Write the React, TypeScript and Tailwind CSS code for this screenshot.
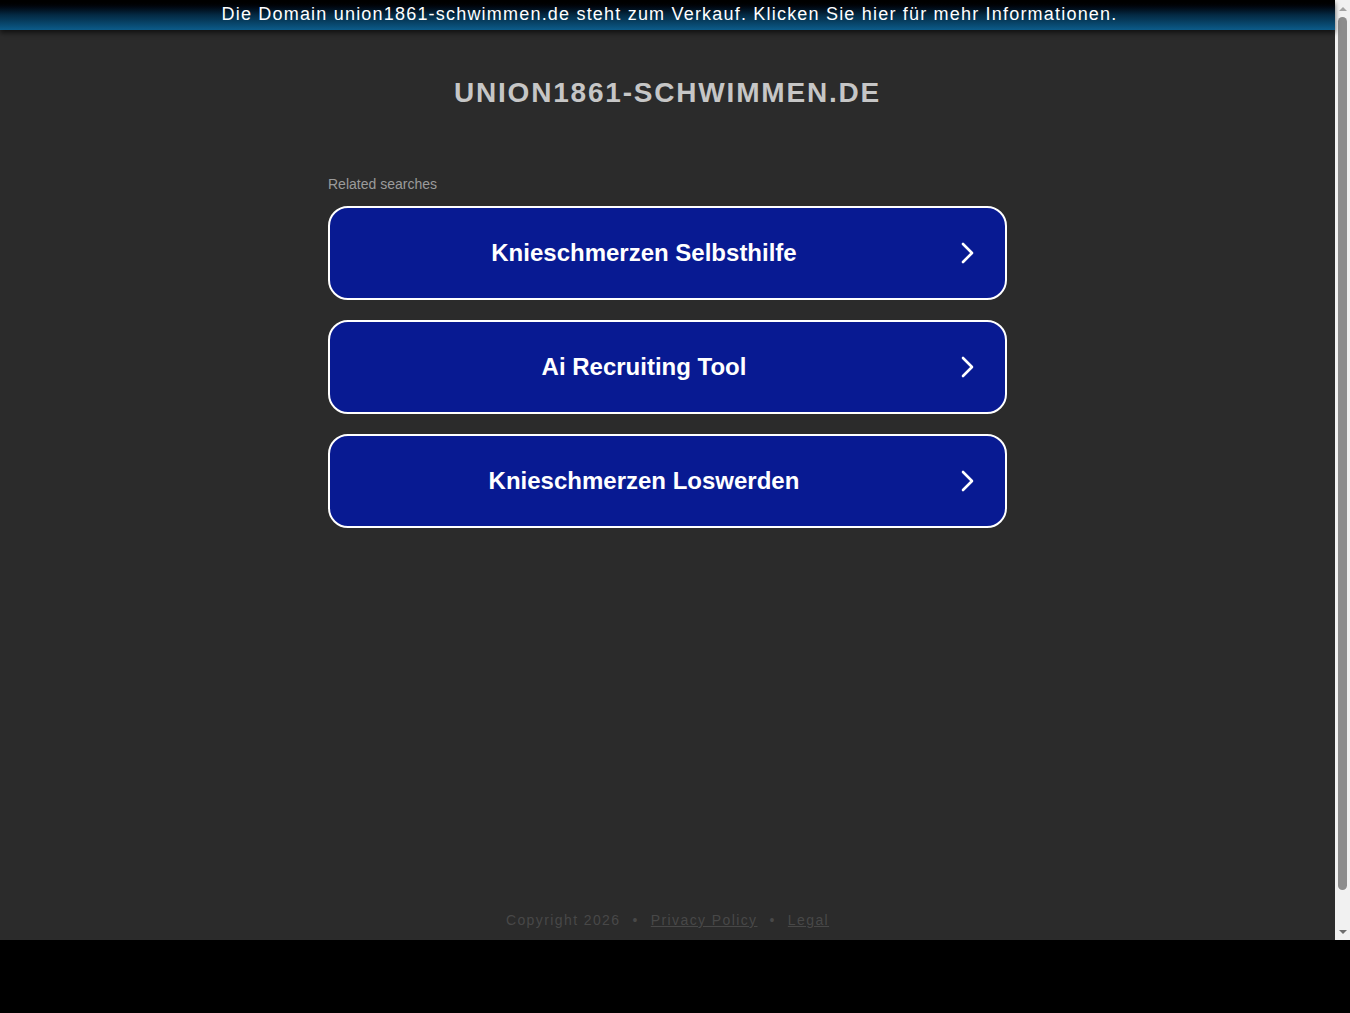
import React from 'react';

const searches = ['Knieschmerzen Selbsthilfe', 'Ai Recruiting Tool', 'Knieschmerzen Loswerden'];

function Chevron() {
  return (
    <svg width="14" height="22" viewBox="0 0 14 22" fill="none" className="shrink-0 ml-[3px]">
      <path d="M2 2l9 9-9 9" stroke="white" strokeWidth="2.6" strokeLinecap="round" strokeLinejoin="round" />
    </svg>
  );
}

function Scrollbar() {
  return (
    <div className="w-[15px] h-full bg-[#f1f1f1] flex flex-col items-center">
      <div className="h-[17px] flex items-center justify-center">
        <div className="w-0 h-0 border-x-[4px] border-x-transparent border-b-[4px] border-b-[#a3a3a3]" />
      </div>
      <div className="w-[9px] flex-1 bg-[#8c8c8c] rounded-[5px] mb-[33px]" />
      <div className="h-[17px] flex items-center justify-center">
        <div className="w-0 h-0 border-x-[4px] border-x-transparent border-t-[4px] border-t-[#6e6e6e]" />
      </div>
    </div>
  );
}

export default function App() {
  return (
    <div className="w-[1350px] h-[1013px] bg-black flex flex-col" style={{ fontFamily: '"Liberation Sans", Arial, sans-serif' }}>
      <div className="h-[940px] flex">
        <div className="flex-1 flex flex-col bg-[#2b2b2b]">
          <div className="h-[30px] bg-gradient-to-b from-black via-[#042a44] to-[#0c5c8a] flex items-center justify-center shadow-[0_3px_5px_rgba(0,0,0,0.6)] relative">
            <p className="text-[18px] text-white tracking-[1.2px] leading-none -mt-[3px] ml-[4px]">
              Die Domain union1861-schwimmen.de steht zum Verkauf. Klicken Sie hier für mehr Informationen.
            </p>
          </div>
          <h1 className="mt-[47px] text-center text-[28px] font-bold text-[#c6c6c6] tracking-[1.8px] leading-[32px]">
            UNION1861-SCHWIMMEN.DE
          </h1>
          <div className="w-[679px] mx-auto mt-[67px]">
            <p className="text-[14px] text-[#9b9b9b] leading-[16px]">Related searches</p>
            <div className="mt-[14px] flex flex-col gap-[20px]">
              {searches.map((s) => (
                <div
                  key={s}
                  className="h-[94px] rounded-[20px] border-2 border-white bg-[#081a92] flex items-center pr-[30px]"
                >
                  <span className="flex-1 text-center text-[24px] font-bold text-white">{s}</span>
                  <Chevron />
                </div>
              ))}
            </div>
          </div>
          <div className="flex-1" />
          <div className="pb-[11px] text-center text-[14px] text-[#484848] tracking-[1.4px] leading-[18px]">
            <span>Copyright 2026</span>
            <span className="mx-[12px]">•</span>
            <span className="underline">Privacy Policy</span>
            <span className="mx-[12px]">•</span>
            <span className="underline">Legal</span>
          </div>
        </div>
        <Scrollbar />
      </div>
    </div>
  );
}
